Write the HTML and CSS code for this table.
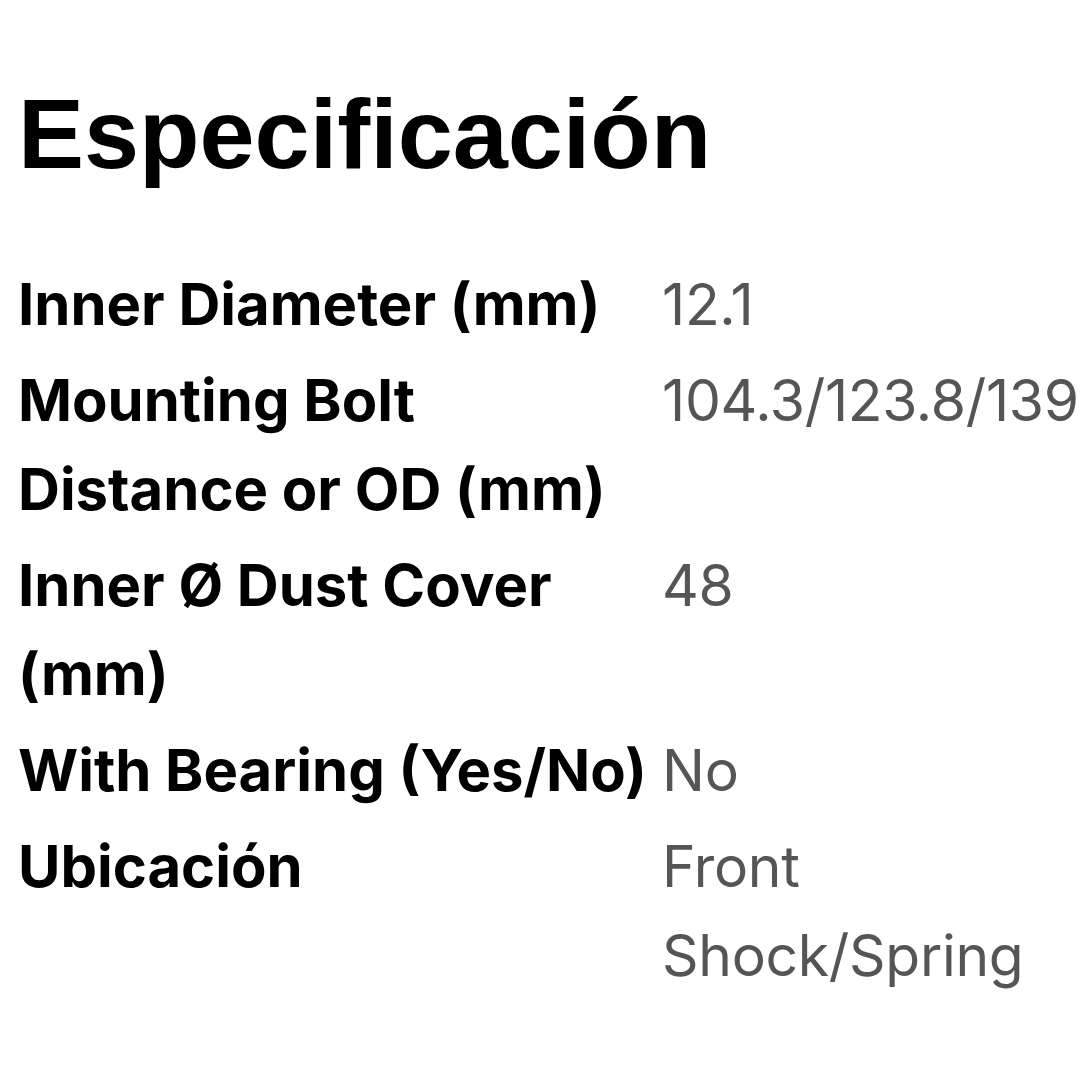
FILE: index.html
```html
<!DOCTYPE html>
<html lang="es">
<head>
<meta charset="utf-8">
<link rel="stylesheet" href="styles.css">
</head>
<body>
<section class="spec">
  <h2 class="spec-title">Especificación</h2>
  <table class="spec-table">
    <tr><th>Inner Diameter (mm)</th><td>12.1</td></tr>
    <tr><th>Mounting Bolt Distance or OD (mm)</th><td>104.3/123.8/139</td></tr>
    <tr><th>Inner Ø Dust Cover (mm)</th><td>48</td></tr>
    <tr><th>With Bearing (Yes/No)</th><td>No</td></tr>
    <tr><th>Ubicación</th><td>Front Shock/Spring</td></tr>
  </table>
</section>
</body>
</html>
```
FILE: styles.css
```css
html, body {
  margin: 0;
  padding: 0;
  background: #ffffff;
  overflow: hidden;
}
.spec {
  padding: 74px 0 0 18px;
  width: 1200px;
}
.spec-title {
  margin: 0 0 63px 0;
  font-family: "Liberation Sans", Arial, sans-serif;
  font-weight: 700;
  font-size: 99px;
  line-height: 120px;
  color: #000;
}
.spec-table {
  border-collapse: collapse;
  table-layout: fixed;
  width: 1044px;
  font-family: Inter, "Noto Sans", sans-serif;
  line-height: 89px;
}
.spec-table th {
  width: 642px;
  padding: 3px 2px 4px 0;
  text-align: left;
  vertical-align: top;
  font-size: 58px;
  font-weight: 700;
  color: #000;
}
.spec-table td {
  width: 400px;
  padding: 3px 0 4px 0;
  vertical-align: top;
  font-size: 57px;
  font-weight: 400;
  letter-spacing: -0.3px;
  color: #555;
  white-space: normal;
}
```
